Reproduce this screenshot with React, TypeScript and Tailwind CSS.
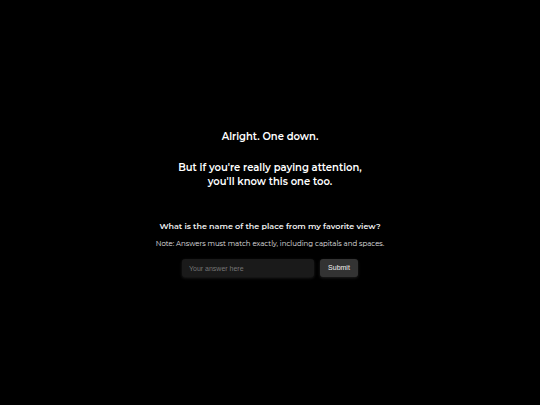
import { useState } from "react";
import type { FormEvent } from "react";

const App = () => {
  const [answer, setAnswer] = useState("");

  const handleSubmit = (e: FormEvent) => {
    e.preventDefault();
  };

  return (
    <main className="flex min-h-screen flex-col items-center justify-center bg-black px-4 pt-0.5 text-center font-['Montserrat','Inter',sans-serif] text-white">
      <h1 className="text-[10px] leading-[14px] font-semibold">Alright. One down.</h1>
      <p className="mt-[17px] text-[10px] leading-[14px] font-semibold">
        But if you're really paying attention,
        <br />
        you'll know this one too.
      </p>
      <form onSubmit={handleSubmit} className="mt-[30px] flex flex-col items-center">
        <label htmlFor="answer" className="text-[8px] leading-[14px] font-semibold text-[#f0f0f0]">
          What is the name of the place from my favorite view?
        </label>
        <p className="mt-1 text-[7px] leading-[14px] text-[#e0e0e0]">
          Note: Answers must match exactly, including capitals and spaces.
        </p>
        <div className="mt-2 flex gap-1.5 font-['Liberation_Sans',sans-serif]">
          <input
            id="answer"
            type="text"
            value={answer}
            onChange={(e) => setAnswer(e.target.value)}
            placeholder="Your answer here"
            className="h-[18px] w-[132px] rounded-[3px] bg-[#1a1a1a] px-[7px] text-[7px] shadow-[0_1px_3px_rgba(255,255,255,0.12)] placeholder:text-[#757575] focus:outline-none"
          />
          <button
            type="submit"
            className="h-[18px] w-[38px] rounded-[3px] bg-[#333] text-[7px] text-[#f0f0f0] shadow-[0_1px_3px_rgba(255,255,255,0.12)]"
          >
            Submit
          </button>
        </div>
      </form>
    </main>
  );
};

export default App;
